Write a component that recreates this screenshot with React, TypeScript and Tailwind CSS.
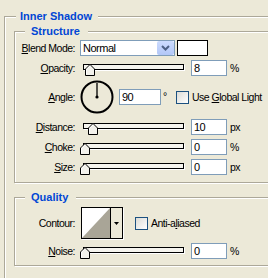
import type { ReactNode } from 'react'

const box = 'border border-[#aca899] shadow-[inset_1px_1px_0_#fff,1px_1px_0_#fff]'
const legend = '-mt-[8px] h-[14px] w-fit bg-[#ece9d8] text-[11px] font-bold leading-[14px] tracking-normal text-[#0046d5]'

function Row({ label, className, children }: { label: ReactNode; className?: string; children: ReactNode }) {
  return (
    <div className={`flex items-center ${className ?? ''}`}>
      <div className="w-[60px] text-right whitespace-nowrap">{label}</div>
      {children}
    </div>
  )
}

function Field({ value, className }: { value: string; className: string }) {
  return (
    <div className={`h-[16px] border border-[#7f9db9] bg-white pl-[2px] text-[11px] leading-[14px] ${className}`}>
      {value}
    </div>
  )
}

function Slider({ thumb }: { thumb: string }) {
  return (
    <div className="relative ml-[5px] h-[16px] w-[104px] pt-[4px]">
      <div className="ml-[3px] h-[6px] w-[101px] border border-black bg-[#f5f4ee] shadow-[1px_1px_0_#fff]" />
      <svg className={`absolute top-[4px] ${thumb}`} width="10" height="12" viewBox="0 0 10 12">
        <polygon points="0.5,11.5 0.5,5 5,0.5 9.5,5 9.5,11.5" fill="#f3f2ec" stroke="#000" />
        <polyline points="1.5,10.5 1.5,5.4 5,1.9" fill="none" stroke="#fff" />
      </svg>
    </div>
  )
}

function Check() {
  return (
    <div className="h-[13px] w-[13px] border border-[#1c5180] bg-linear-to-br from-[#dcdcd7] to-white" />
  )
}

function SliderRow({ label, thumb, value, unit, className }: { label: ReactNode; thumb: string; value: string; unit: string; className: string }) {
  return (
    <Row label={label} className={`h-[16px] ${className}`}>
      <Slider thumb={thumb} />
      <Field value={value} className="ml-[7px] w-[36px]" />
      <span className="ml-[3px]">{unit}</span>
    </Row>
  )
}

export default function App() {
  return (
    <div className="h-[278px] w-[268px] overflow-hidden bg-[#ece9d8] pl-[4px] pt-[16px] font-['Liberation_Sans',Arial,sans-serif] text-[10.5px] leading-[14px] tracking-[-0.5px] text-black">
      <div className={`h-[300px] w-[300px] ${box}`}>
        <div className={`${legend} ml-[11px] pl-[4px] pr-[6px]`}>Inner Shadow</div>

        <div className={`ml-[9px] mt-[8px] w-[270px] pb-[7px] ${box}`}>
          <div className={`${legend} ml-[10px] pl-[6px] pr-[8px]`}>Structure</div>

          <Row label={<><u>B</u>lend Mode:</>} className="mt-[2px] h-[16px]">
            <div className="ml-[5px] flex h-[16px] w-[95px] items-center justify-between border border-[#7f9db9] bg-white pl-[2px] text-[11px]">
              <span>Normal</span>
              <div className="flex h-[14px] w-[17px] items-center justify-center rounded-[2px] bg-linear-to-b from-[#cddcfe] to-[#b2c7f7]">
                <svg width="9" height="6" viewBox="0 0 9 6">
                  <polyline points="1,1 4.5,4.5 8,1" fill="none" stroke="#4d6185" strokeWidth="2" />
                </svg>
              </div>
            </div>
            <div className="ml-[2px] h-[16px] w-[31px] border border-black bg-white" />
          </Row>

          <SliderRow label={<><u>O</u>pacity:</>} thumb="left-[5px]" value="8" unit="%" className="mt-[4px]" />

          <Row label={<><u>A</u>ngle:</>} className="mt-[4px] h-[34px]">
            <svg className="ml-[5px]" width="34" height="34" viewBox="0 0 34 34">
              <circle cx="17" cy="17" r="15.5" fill="none" stroke="#000" strokeWidth="2" />
              <line x1="17" y1="17" x2="17" y2="3" stroke="#000" strokeWidth="1.3" />
              <circle cx="17" cy="17" r="1.6" fill="#000" />
            </svg>
            <Field value="90" className="ml-[5px] w-[42px]" />
            <span className="ml-[2px] w-[13px] self-start pt-[9px]">°</span>
            <Check />
            <span className="ml-[3px] whitespace-nowrap">Use <u>G</u>lobal Light</span>
          </Row>

          <SliderRow label={<><u>D</u>istance:</>} thumb="left-[8px]" value="10" unit="px" className="mt-[5px]" />
          <SliderRow label={<><u>C</u>hoke:</>} thumb="left-0" value="0" unit="%" className="mt-[4px]" />
          <SliderRow label={<><u>S</u>ize:</>} thumb="left-0" value="0" unit="px" className="mt-[4px]" />
        </div>

        <div className={`ml-[9px] mt-[14px] w-[270px] pb-[6px] ${box}`}>
          <div className={`${legend} ml-[10px] pl-[6px] pr-[8px]`}>Quality</div>

          <Row label="Contour:" className="mt-[3px] h-[32px]">
            <div className="ml-[6px] flex h-[32px] w-[42px] border border-black shadow-[1px_1px_0_#fff]">
              <svg width="28" height="30" viewBox="0 0 28 30" preserveAspectRatio="none">
                <rect width="28" height="30" fill="#fff" />
                <polygon points="0,30 28,0 28,30" fill="#a9a597" />
              </svg>
              <div className="flex w-[12px] items-center justify-center border-l border-black bg-[#ece9d8]">
                <svg width="5" height="3" viewBox="0 0 5 3">
                  <polygon points="0,0 5,0 2.5,3" fill="#000" />
                </svg>
              </div>
            </div>
            <div className="ml-[12px]">
              <Check />
            </div>
            <span className="ml-[3px] whitespace-nowrap">Anti-a<u>l</u>iased</span>
          </Row>

          <SliderRow label={<><u>N</u>oise:</>} thumb="left-0" value="0" unit="%" className="mt-[4px]" />
        </div>
      </div>
    </div>
  )
}
